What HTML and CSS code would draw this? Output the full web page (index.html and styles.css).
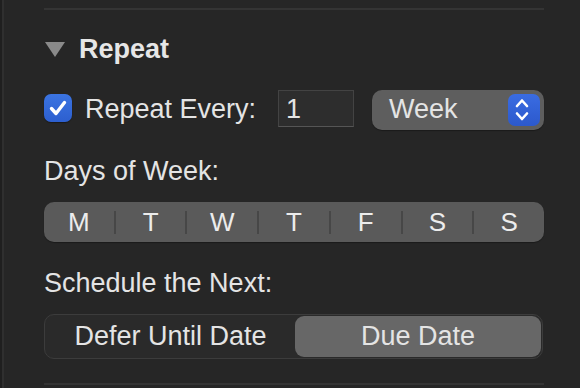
FILE: index.html
```html
<!DOCTYPE html>
<html>
<head>
<meta charset="utf-8">
<link rel="stylesheet" href="styles.css">
</head>
<body>
<div class="frame">
  <div class="inner">
    <div class="divider top"></div>
    <div class="header">
      <svg class="disclosure" width="20" height="16" viewBox="0 0 20 16"><polygon points="0,1 20,1 10,16" fill="#8a8a8a"/></svg>
      <span class="title">Repeat</span>
    </div>
    <div class="repeat-row">
      <div class="checkbox">
        <svg width="28" height="28" viewBox="0 0 28 28"><path d="M7.5 14.5 L12 19.5 L20.5 8.5" fill="none" stroke="#fff" stroke-width="3.4" stroke-linecap="round" stroke-linejoin="round"/></svg>
      </div>
      <span class="label repeat-label">Repeat Every:</span>
      <div class="textfield">1</div>
      <div class="popup">
        <span class="popup-text">Week</span>
        <div class="stepper">
          <svg width="32" height="32" viewBox="0 0 32 32"><path d="M9 12 L14 6.5 L19 12 M9 19.5 L14 25 L19 19.5" fill="none" stroke="#fff" stroke-width="2.6" stroke-linecap="round" stroke-linejoin="round"/></svg>
        </div>
      </div>
    </div>
    <div class="label section-label">Days of Week:</div>
    <div class="days">
      <span class="day">M</span><span class="sep"></span>
      <span class="day">T</span><span class="sep"></span>
      <span class="day">W</span><span class="sep"></span>
      <span class="day">T</span><span class="sep"></span>
      <span class="day">F</span><span class="sep"></span>
      <span class="day">S</span><span class="sep"></span>
      <span class="day">S</span>
    </div>
    <div class="label section-label">Schedule the Next:</div>
    <div class="segmented">
      <span class="seg">Defer Until Date</span>
      <span class="seg selected">Due Date</span>
    </div>
    <div class="divider bottom"></div>
  </div>
</div>
</body>
</html>
```
FILE: styles.css
```css
html, body {
  margin: 0;
  padding: 0;
  background: #262626;
  width: 580px;
  height: 388px;
  overflow: hidden;
  font-family: "Liberation Sans", Arial, sans-serif;
  color: #e4e4e4;
}
.frame {
  height: 388px;
  border-left: 2px solid #1f1f1f;
}
.inner {
  height: 388px;
  border-left: 2px solid #2f2f2f;
  padding-left: 40px;
  display: flex;
  flex-direction: column;
  width: 500px;
}
.divider {
  height: 2px;
  background: #343434;
  width: 500px;
}
.divider.top { margin-top: 8px; }
.divider.bottom { margin-top: 24px; }
.header {
  margin-top: 24px;
  height: 30px;
  display: flex;
  align-items: center;
}
.disclosure {
  margin-left: 1px;
  margin-right: 14px;
}
.title {
  font-weight: bold;
  font-size: 27px;
  line-height: 30px;
  color: #e6e6e6;
  white-space: nowrap;
}
.repeat-row {
  margin-top: 26px;
  height: 40px;
  display: flex;
  align-items: flex-start;
}
.checkbox {
  flex: none;
  margin-top: 4px;
  width: 28px;
  height: 28px;
  border-radius: 7px;
  background: linear-gradient(#3b74e2, #2d5fcf);
  box-shadow: 0 1px 1px rgba(0,0,0,0.35);
}
.checkbox svg { display: block; }
.label {
  font-size: 27px;
  line-height: 30px;
  white-space: nowrap;
}
.repeat-label {
  flex: none;
  width: 193px;
  margin-left: 13px;
  line-height: 38px;
}
.textfield {
  flex: none;
  width: 67px;
  height: 35px;
  padding-left: 7px;
  background: #2d2d2d;
  border: 1px solid #434343;
  border-bottom-color: #555;
  font-size: 27px;
  line-height: 36px;
}
.popup {
  flex: none;
  margin-left: 18px;
  width: 172px;
  height: 40px;
  border-radius: 10px;
  background: #5e5e5e;
  box-shadow: 0 1px 1px rgba(0,0,0,0.3);
  display: flex;
  align-items: center;
  justify-content: space-between;
}
.popup-text {
  margin-left: 17px;
  font-size: 27px;
  line-height: 40px;
  margin-top: -3px;
}
.stepper {
  width: 32px;
  height: 32px;
  margin-right: 4px;
  border-radius: 7px;
  background: linear-gradient(#3a6ce2, #2c59cc);
}
.stepper svg { display: block; }
.section-label {
  margin-top: 26px;
}
.days {
  margin-top: 16px;
  height: 40px;
  width: 500px;
  border-radius: 10px;
  background: #5a5a5a;
  box-shadow: 0 1px 1px rgba(0,0,0,0.3);
  display: flex;
  align-items: center;
}
.day {
  flex: 1;
  text-align: center;
  font-size: 26px;
  line-height: 40px;
  color: #ececec;
}
.sep {
  width: 2px;
  height: 23px;
  background: #474747;
}
.segmented {
  margin-top: 16px;
  width: 495px;
  height: 41px;
  border: 1px solid #3c3c3c;
  border-radius: 10px;
  background: #2a2a2a;
  display: flex;
  align-items: stretch;
  padding: 1px;
}
.seg {
  flex: 0 0 249px;
  text-align: center;
  font-size: 27px;
  line-height: 40px;
  border-radius: 9px;
  white-space: nowrap;
}
.seg.selected {
  flex: 0 0 246px;
  background: #676767;
  margin-left: auto;
}
```
